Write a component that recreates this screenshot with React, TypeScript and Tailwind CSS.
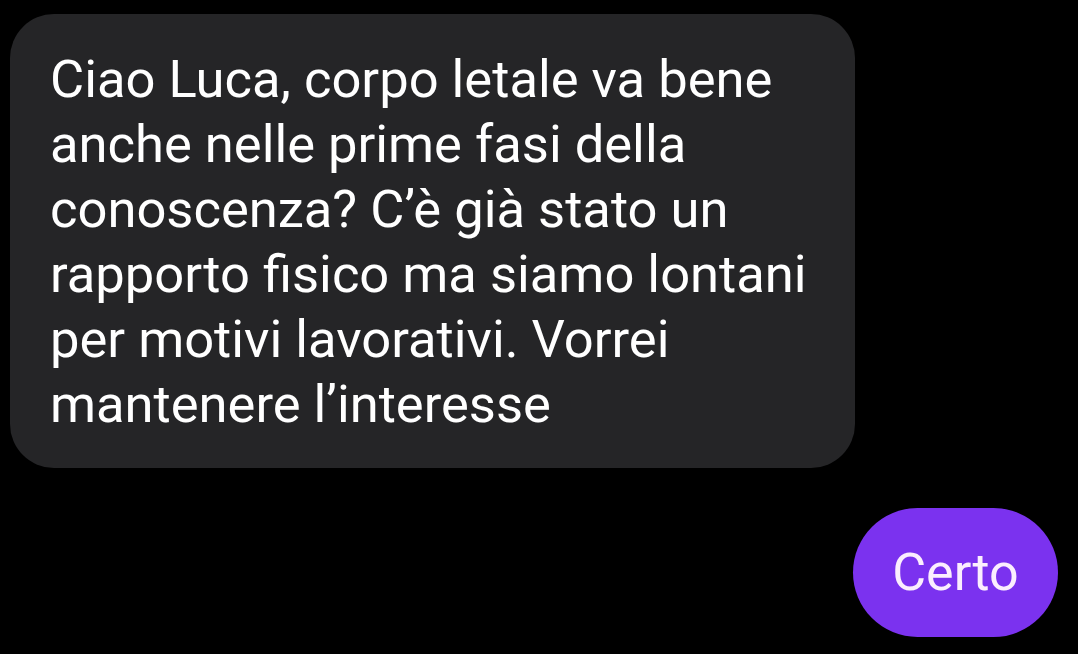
export default function App() {
  const lines = [
    'Ciao Luca, corpo letale va bene',
    'anche nelle prime fasi della',
    'conoscenza? C\u2019è già stato un',
    'rapporto fisico ma siamo lontani',
    'per motivi lavorativi. Vorrei',
    'mantenere l\u2019interesse',
  ];

  return (
    <div
      className="w-[1078px] h-[654px] bg-black overflow-hidden flex flex-col"
      style={{ fontFamily: 'Roboto, "Liberation Sans", sans-serif' }}
    >
      {/* messaggio ricevuto */}
      <div className="pt-[14px] pl-[10px]">
        <div className="w-[845px] bg-[#252527] rounded-[44px] pl-[40px] pt-[33px] pb-[31px] text-white text-[52.5px] leading-[65px]">
          {lines.map((l, i) => (
            <div key={i} className="whitespace-nowrap">
              {l}
            </div>
          ))}
        </div>
      </div>

      {/* messaggio inviato */}
      <div className="flex justify-end pr-[20px] mt-[40px]">
        <div className="h-[129px] w-[205px] rounded-full bg-[#7b32ef] flex items-center justify-center text-[#fbeefe] text-[52px] leading-none">
          Certo
        </div>
      </div>
    </div>
  );
}
